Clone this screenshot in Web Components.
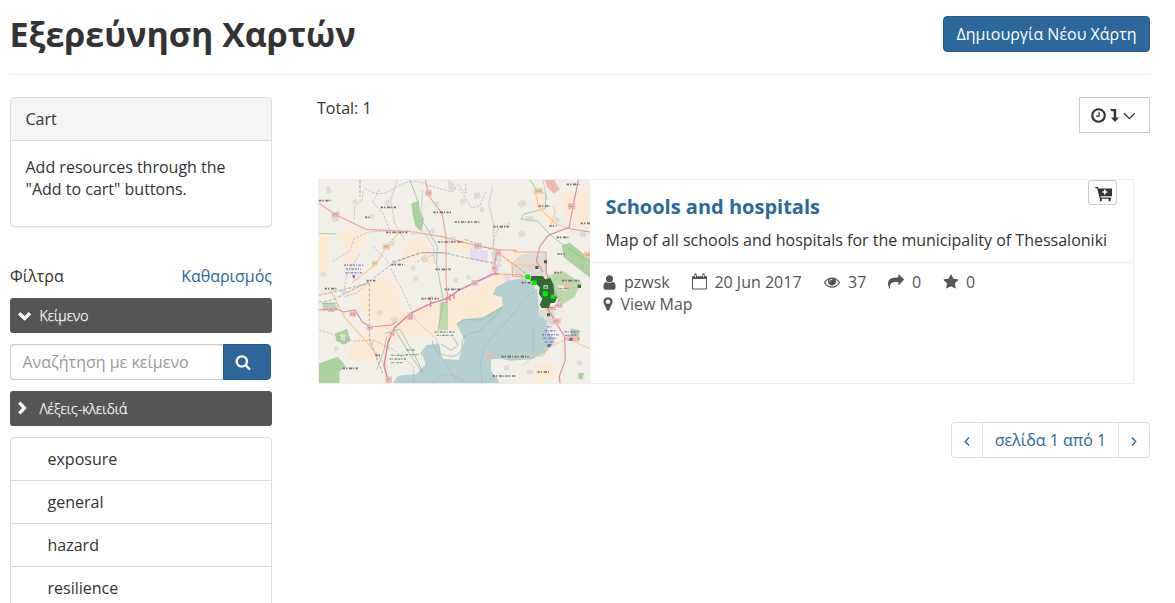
<!DOCTYPE html>
<html lang="el">
<head>
<meta charset="utf-8">
<title>Εξερεύνηση Χαρτών</title>
<style>
html,body{margin:0;height:603px;overflow:hidden;background:#fff}
body{font:16px/22px "Open Sans","Noto Sans",sans-serif;color:#333}
</style>
</head>
<body>
<explore-page></explore-page>
<script>
const define = (name, html) => {
  const t = document.createElement('template');
  t.innerHTML = '<style>*{box-sizing:border-box}:host{display:block;box-sizing:border-box}</style>' + html;
  customElements.define(name, class extends HTMLElement {
    constructor() { super(); this.attachShadow({mode: 'open'}).append(t.content.cloneNode(true)); }
  });
};

const FA = {
  user: 'M1536 1399q0 109-62.5 187t-150.5 78h-854q-88 0-150.5-78t-62.5-187q0-85 8.5-160.5t31.5-152 58.5-131 94-89 134.5-34.5q131 128 313 128t313-128q76 0 134.5 34.5t94 89 58.5 131 31.5 152 8.5 160.5zm-256-887q0 159-112.5 271.5t-271.5 112.5-271.5-112.5-112.5-271.5 112.5-271.5 271.5-112.5 271.5 112.5 112.5 271.5z',
  eye: 'M1664 960q-152-236-381-353 61 104 61 225 0 185-131.5 316.5t-316.5 131.5-316.5-131.5-131.5-316.5q0-121 61-225-229 117-381 353 133 205 333.5 326.5t434.5 121.5 434.5-121.5 333.5-326.5zm-720-384q0-20-14-34t-34-14q-125 0-214.5 89.5t-89.5 214.5q0 20 14 34t34 14 34-14 14-34q0-86 61-147t147-61q20 0 34-14t14-34zm848 384q0 34-20 69-140 230-376.5 368.5t-499.5 138.5-499.5-139-376.5-368q-20-35-20-69t20-69q140-229 376.5-368t499.5-139 499.5 139 376.5 368q20 35 20 69z',
  share: 'M1792 640q0 26-19 45l-512 512q-19 19-45 19t-45-19-19-45v-256h-224q-98 0-175.5 6t-154 21.5-133 42.5-105.5 69.5-80 101-48.5 138.5-17.5 181q0 55 5 123 0 6 2.5 23.5t2.5 26.5q0 15-8.5 25t-23.5 10q-16 0-28-17-7-9-13-22t-13.5-30-10.5-24q-127-285-127-451 0-199 53-333 162-403 875-403h224v-256q0-26 19-45t45-19 45 19l512 512q19 19 19 45z',
  star: 'M1728 647q0 22-26 48l-363 354 86 500q1 7 1 20 0 21-10.5 35.5t-30.5 14.5q-19 0-40-12l-449-236-449 236q-22 12-40 12-21 0-31.5-14.5t-10.5-35.5q0-6 2-20l86-500-364-354q-25-27-25-48 0-37 56-46l502-73 225-455q19-41 49-41t49 41l225 455 502 73q56 9 56 46z',
  marker: 'M1152 640q0-106-75-181t-181-75-181 75-75 181 75 181 181 75 181-75 75-181zm256 0q0 109-33 179l-364 774q-16 33-47.5 52t-67.5 19-67.5-19-46.5-52l-365-774q-33-70-33-179 0-212 150-362t362-150 362 150 150 362z',
  search: 'M1216 832q0-185-131.5-316.5t-316.5-131.5-316.5 131.5-131.5 316.5 131.5 316.5 316.5 131.5 316.5-131.5 131.5-316.5zm512 832q0 52-38 90t-90 38q-54 0-90-38l-343-342q-179 124-399 124-143 0-273.5-55.5t-225-150-150-225-55.5-273.5 55.5-273.5 150-225 225-150 273.5-55.5 273.5 55.5 225 150 150 225 55.5 273.5q0 220-124 399l343 343q37 37 37 90z',
  clock: 'M1024 544v448q0 14-9 23t-23 9h-320q-14 0-23-9t-9-23v-64q0-14 9-23t23-9h224v-352q0-14 9-23t23-9h64q14 0 23 9t9 23zm416 352q0-148-73-273t-198-198-273-73-273 73-198 198-73 273 73 273 198 198 273 73 273-73 198-198 73-273zm224 0q0 209-103 385.5t-279.5 279.5-385.5 103-385.5-103-279.5-279.5-103-385.5 103-385.5 279.5-279.5 385.5-103 385.5 103 279.5 279.5 103 385.5z'
};
/* other icons: [width, height, markup] */
const ICONS = {
  calendar: [15, 16, '<path d="M.5 4.5h14v10.5H.5z" fill="none" stroke="currentColor"/><path d="M0 2.2h15v2.8H0z" fill="currentColor"/><path d="M3.5.4v3.2M11.5.4v3.2" stroke="currentColor" stroke-width="2.4" stroke-linecap="round"/><path d="M3.5.8v2.6M11.5.8v2.6" stroke="#fff" stroke-width=".8"/>'],
  down: [14, 10, '<path d="M1.2 2.2 6.6 7.4l5.4-5.2" fill="none" stroke="currentColor" stroke-width="3.4"/>'],
  right: [10, 14, '<path d="M1.3 2.6 6.5 8l-5.2 5.4" fill="none" stroke="currentColor" stroke-width="3.4"/>'],
  thin: [13, 8, '<path d="M1 1.2 6.4 6.6l5.4-5.4" fill="none" stroke="currentColor" stroke-width="1.3"/>'],
  level: [9, 13, '<path d="M0 0h6.2v8.5H9L5 13 1 8.5h2.7V2.2H1.6z" fill="currentColor"/>'],
  prev: [6, 9, '<path d="M5 .5 1.2 4.5 5 8.5" fill="none" stroke="currentColor" stroke-width="1.3"/>'],
  next: [6, 9, '<path d="M1 .5 4.8 4.5 1 8.5" fill="none" stroke="currentColor" stroke-width="1.3"/>'],
  cart: [17, 16, '<path d="M.3 0h2.6l.6 1.4H17v7.8H5.6l.4 1.4h10.2v1.2h-.6v2.4h-2v-2.4H6.8v2.4h-2v-2.4L2.2 1.2H.3z" fill="currentColor"/><path d="M9.8 2.4v5.2M7.2 5h5.2" stroke="#fff" stroke-width="1.5"/>']
};
customElements.define('ui-icon', class extends HTMLElement {
  constructor() {
    super();
    this.attachShadow({mode: 'open'});
  }
  connectedCallback() {
    const n = this.getAttribute('name'), s = this.getAttribute('size') || 16, i = ICONS[n];
    this.shadowRoot.innerHTML = '<style>:host{display:inline-block;line-height:0;flex:none}svg{display:block;overflow:visible}</style>' +
      (i ? `<svg width="${i[0]}" height="${i[1]}" viewBox="0 0 ${i[0]} ${i[1]}">${i[2]}</svg>`
         : `<svg width="${s}" height="${s}" viewBox="0 0 1792 1792"><path fill="currentColor" d="${FA[n]}"/></svg>`);
  }
});

define('page-header', `<style>
:host{display:flex;justify-content:space-between;align-items:flex-start;height:75px;border-bottom:1px solid #eee;padding-top:15px}
h1{margin:0 0 0 -.5px;font-size:34px;line-height:38px;font-weight:700}
a{margin-top:1px;height:36px;width:207px;text-align:center;white-space:nowrap;line-height:35px;border:1px solid #265a88;background:#2c689c;color:#fff;border-radius:4px}
</style><h1><slot name="title"></slot></h1><a><slot name="action"></slot></a>`);

define('cart-panel', `<style>
:host{border:1px solid #ddd;border-radius:4px;height:130px;box-shadow:0 1px 1px rgba(0,0,0,.05);overflow:hidden}
header{height:43px;background:#f5f5f5;border-bottom:1px solid #ddd;padding:10px 14.5px}
div{padding:15px 14.5px}
</style><header><slot name="heading"></slot></header><div><slot></slot></div>`);

define('filter-bar', `<style>
:host{display:flex;align-items:center;height:35px;background:#555;color:#fff;border-radius:3px;font-size:14px}
span{width:29.5px;padding-left:8px}ui-icon{vertical-align:middle}
b{font-weight:300;-webkit-text-stroke:.25px #fff}
</style><span><slot name="icon"></slot></span><b><slot></slot></b>`);

define('search-box', `<style>
:host{display:flex;height:36px;width:261px}
div{width:213px;border:1px solid #ccc;border-right:0;border-radius:4px 0 0 4px;line-height:34px;padding-left:11.5px;color:#999;box-shadow:inset 0 1px 1px rgba(0,0,0,.075)}
button{font:inherit;flex:1;border:1px solid #265a88;background:#2c689c;color:#fff;border-radius:0 4px 4px 0;padding:0 0 0 11px;display:flex;align-items:center}
</style><div><slot></slot></div><button><ui-icon name="search" size="16"></ui-icon></button>`);

define('keyword-list', `<style>
:host{border:1px solid #ddd;border-radius:4px;overflow:hidden}
::slotted(div){height:43px;box-sizing:border-box;border-bottom:1px solid #ddd;padding:10px 0 0 36.5px}
</style><slot></slot>`);

define('page-nav', `<style>
:host{display:flex;width:199px;height:36px;border:1px solid #ddd;border-radius:4px;color:#2c689c;line-height:34px}
span{display:flex;align-items:center;justify-content:center;width:30px;padding-top:2px}
b{font-weight:400;flex:1;text-align:center;border:solid #ddd;border-width:0 1px;white-space:nowrap}
</style><span><ui-icon name="prev"></ui-icon></span><b><slot></slot></b><span><ui-icon name="next"></ui-icon></span>`);

define('meta-item', `<style>
:host{display:inline-flex;align-items:center;height:22px;white-space:nowrap}
</style><slot></slot>`);

/* thumbnail: three drawing units to a pixel, slightly softened like a scaled map tile */
define('map-thumb', `<style>:host{width:271px;height:203px;overflow:hidden}svg{display:block}</style>
<svg width="271" height="203" viewBox="27 30 813 609" fill="none">
<filter id="soft" x="0" y="0" width="1" height="1"><feGaussianBlur stdDeviation="1.3"/></filter>
<path fill="#f2efe9" d="M27 30h813v609H27z"/>
<g filter="url(#soft)"><path fill="#f2efe9" d="M0 0h880v680H0z"/>
<g fill="#fcead5">
<path d="M98 185l34-8 34 5 4 40-24 18-20 55-18-20-8-50-24-20zM278 222l50-20 36 22 14 60-30 4-20-22-50 12zM27 193h25l10 50-10 78-25-10zM178 335l44-18 42 30 4 60 40 22 90-37 100-38 90-50 4 92-30 30-90 24-40 38-110 12-64 8-40 40-24-70-40-68-44-56zM150 486l74 0-14 66-20 30-74-14 4-40zM752 70l90-10v130l-36-36-40-2zM666 62l32 0 16 60 40 50-66-30zM400 207l60 0 25 20 0 22-70-14zM560 250l70-8 70 30-8 42-80-20zM735 300l40 5 10 40-40 15zM670 590l60-15 6 50-60 14zM820 240l20 0v24h-18z"/></g>
<g fill="#d8d4d0" opacity=".75">
<path d="M608 275l28-22 74-8-2 72-20 32-54-32-24-10zM690 420l40 0 12 45-22 0-30-22zM545 245l30 0 0 30-28 0z"/></g>
<g fill="#e8dcec"><path d="M480 235l54 8-2 36-52-10zM546 276l26 8-8 32-22-6zM582 315l22 0v20h-20z"/></g>
<path fill="#b5d0d0" d="M246 645l18-28 54-5 28-28-4-20-12-14 20-25 38-4 8 45 50 4 18-60-25-48 20-14 60-7 58-32 0-28-28-7 8-22 38-20 44-8 30 20 14 24 6 70 22 14 2 32 20 22-4 16-24 28-40 18-64 4-28-6-30 2 0 34 20 24 12 38z"/>
<path fill="#f2efe9" d="M390 478l40 0 20 60-20 18-30-6z"/>
<g fill="#add19e">
<path d="M304 100l22-8 4 30 12 24-8 40-18-18-8-34zM756 225l24-7 60 50v55l-44-34-36-28zM20 582l64-22 24 30-20 14 0 41-68 0zM76 490l36-14 10 36-20 12-24-12zM782 475l26 6 0 35-24-6zM806 608l16 2-6 20-12-6z"/>
<path opacity=".8" d="M708 320l48-18 60 38-24 42-38 22-20-30z"/>
<path opacity=".75" d="M390 396h24v84h-28zM36 400l38-3 8 22-42 0z"/></g>
<path fill="#f2efe9" opacity=".8" d="M90 492l16 2-2 18-10-4zM742 344l28 4 4 14-24-2z"/>
<g fill="#f2b8b0"><path d="M704 30l28 0 18 28-18 13-20-18zM528 560l14-13 10 4-16 18-8-4zM764 338l14 4-4 17-12-5z"/></g>
<g stroke="#94bf99" stroke-width="2.8" opacity=".85">
<path d="M27 190l52 2M300 30l26 70M334 150l14 20 34 60-2 52 20 110-16 90M660 30l20 28 28 14-3 44-64 16-8 15 50 6 38 42 50 38 80 50M366 512q6 40 40 44 40 12 50-22-6-50 50-48l70-70M224 490l46-12 28 50 22 40 20 40M230 500l-8 40-22 60M258 484l46 76 32 46M428 500l16 25-20 16-30-18M440 462l24-14 50 2 64-40M36 400l46 0 0 20-44 0"/></g>
<g stroke="#b7cdc8" stroke-width="2.4"><path d="M548 50l-12 50 14 60 0 90 24 40M262 30l-20 60 12 70 30 50M338 60l-8 110 40 60 4 50M160 60l-4 30-22 20-2 40M698 30l14 60"/></g>
<g stroke="#b9a0c9" stroke-width="2.6" stroke-dasharray="8 4" opacity=".75">
<path d="M165 54q40 34 90 0t100-8l70 20 20-22 22 26 0-28M208 60l-20 36 32 36 20 50-64 4-44 20-12 36-54 34M448 55l36 58 24-4 20-44M190 230l40 40 56 110 32 70 60 56 14 52 46 70M420 250l-40 0-66 28M600 160l-40 20-14 60M178 340l-40 30-36 10M27 480l44 14 60 20 60-4 60 30 60 50 0 49M370 639q40-50 100 0M670 470l0 90-36 30M150 250l-38 60-10 52"/></g>
<path stroke="#9baddb" stroke-width="2.5" stroke-dasharray="9 5" d="M684 358l-28 18-60 70-52 60q-30 28-32 80l4 53"/>
<g stroke="#faca93" stroke-width="3.4"><path d="M127 338l72-56 30-53 40-44M62 360l14 28 28 54 80 90 48 60M677 70l8 40 50 50 34 14M730 110l6 18-14 40M560 244l48 40 90 4M600 558h100l12-24 60-28 68 30M702 388l4 30 10 12"/></g>
<g stroke="#f2a892" stroke-width="3.5"><path d="M27 100l50 34 92 44 130 6 96 16 110 28 56 10 60 4M346 30l12 50 38 50 12 70 0 130 6 60M610 246l98 0 0 56M558 312l70 2 20 8M606 284l2 34 40 4"/></g>
<g stroke="#e08fa3" stroke-width="3.6"><path d="M805 30l-10 50-18 92-62 24-26 34-10 45 20 30M766 174l74 12M27 420l48-4 26 10 34-6 22 36 26 15 62-6 14-10M560 246l-8 50 6 16M709 270l0 40 26 56 8 18M752 384l-18 28-24 0 26 42 28 46 2 70-18 50 2 19M712 416l26 2M766 504l44 2"/>
<path stroke="#dc8299" stroke-width="4.4" d="M236 639l-14-52 12-70 20-44 48-44 60-28 50-16 34-24 46-22 56-26 18-2M362 392v18M420 372v20M432 370v16M410 380v18"/></g>
<g stroke="#999" stroke-width="2.4" stroke-dasharray="10 5"><path d="M27 396q28 0 60-16l92-46 70-54 80-32 74 0 30 8 120 24M340 248h60M464 208l82 32M178 340v170l40 100M27 376l150-36M246 276l90-28M554 240l104 78M150 30v50"/></g>
<g fill="#d4d4d3" opacity=".7"><path d="M64 144l22-8 2 14-18 8zM46 55l12-8 8 20-14 6zM126 94l12-10 6 14-10 6zM224 95l14-8 0 20-12 0zM180 132l14 2-6 14-10-4zM412 30l16 6 10 20-12 14-10-14zM490 70l18-4 4 18-18 4zM370 94l18 2-4 18-12-6zM300 182l20 0 2 14-18-2zM356 180l14-6 6 12-14 8zM300 290l14-4 4 14-12 4zM240 212l14 2-2 16-12-4zM332 260l14-6 10 18-16 8zM420 200l18 0-2 20-18-4zM90 360l18-4 6 16-18 0zM240 446l18-8 10 14-20 8zM198 425l18-6 4 14-16 6zM354 380l14-6 0 16-14 2zM30 310l16-8 4 16-14 4zM620 100l22-14 8 18-18 10zM646 138l24 0 2 16-22 2zM624 186l18-4 4 16-18 4zM510 110l14 4-4 14-12-4zM736 140l14 4-4 14-12-4zM810 180l20 10-4 12-18-4zM430 325l14 0 0 12-14 0zM450 90l14-6 4 14-16 4zM310 322l14-4 0 14-12 2zM470 315l14 2-2 12-14-2zM580 590l14-6 6 14-16 4zM650 600l14-4 8 14-20 4zM800 570l16 4 0 14-14-4zM180 510l12 4-2 16-12-4zM74 530l12 2-4 12-10-2z"/></g>
<g fill="#ebbcb9"><path d="M64 125h24v17H64zM346 60h19v18h-19zM492 218h23v18h-23zM555 240h18v18h-18zM546 286h16v18h-16zM484 330h18v17h-18zM774 100h22v18h-22zM292 428h18v22h-18zM118 424h20v16h-20zM54 412h20v14H54zM170 466h18v14h-18zM238 484h16v14h-16zM226 620h20v18h-20zM740 398h18v16h-18zM728 445h24v16h-24zM770 496h32v16h-32z"/></g>
<g fill="#e9cfa8"><path d="M218 221h22v18h-22zM186 272h16v16h-16zM672 54h26v18h-26zM822 245h18v18h-18z"/></g>
<g stroke="#925b50" stroke-width="2.5" stroke-dasharray="4 3" opacity=".8"><path d="M69 134h15M350 69h11M496 227h15M222 230h14M190 280h9M677 63h17M778 109h14M296 435h10M296 443h10M122 432h12M58 419h12M174 473h10M242 491h9M231 629h9M559 249h10M549 295h9M487 339h11M743 406h11M733 453h14M827 255h11"/></g>
<g stroke="#444" stroke-width="5" stroke-dasharray="7 3 4 5 10 3 3 4" opacity=".72"><path d="M27 92h36M212 112h46M370 127h54M434 156h74M228 187h64M384 216h74M244 284h40M376 298h48M44 356h38M170 332h26M334 386h56M404 358h46M550 170h50M770 43h40M686 108h34M718 168h22M812 160h28M740 202h36M742 252h22M732 308h22M756 332h54M634 338h30M98 595h46M574 560h82M548 618h68M682 606h36M196 556h14M165 142h18"/></g>
<g stroke="#557c5c" stroke-width="4" stroke-dasharray="6 3 3 4 8 3" opacity=".75"><path d="M374 486h60M380 496h50M244 556h46M238 567h50M244 578h36M290 540h24M288 554h38M748 356h28"/></g>
<g stroke="#7466bc" stroke-width="4.4" stroke-dasharray="6 3 3 4 8 3" opacity=".75"><path d="M102 286h58M108 297h45M106 308h50M712 470h14M704 482h32M696 494h50M700 505h40M704 516h30M764 485h44M766 496h36"/></g>
<path fill="#7466bc" d="M126 316h10l-4 12zM713 522h12l-4 9-10 0zM779 504h9v8h-12z"/>
</g>
<path fill="#346d34" d="M663 318l36 0 6 10 16-4 10 20 2 32 8 6-6 16-14 2-4 14-22 0-6-10 8-18-10-14 2-20-14-14-14-6zM676 288h9v9h-9zM702 271h9v9h-9zM803 344h10v10h-10zM711 430h9v9h-9z"/>
<path fill="#add19e" d="M700 345h14v12h-14z"/><path fill="#346d34" d="M704 349h6v6h-6z"/>
<path fill="#0e0" d="M646 314h14v14h-14zM665 331h15v14h-15zM698 364h15v15h-15zM722 374h14v12h-14z"/>
</svg>`);

define('resource-card', `<style>
:host{display:flex;width:816px;height:205px;border:1px solid #eee;position:relative}
section{flex:1;display:flex;flex-direction:column;padding-right:1px}
.top{height:83px;border-bottom:1px solid #eee;padding:16px 0 0 15.4px}
h4{margin:0;font-size:20px;line-height:22px;font-weight:700;color:#2c689c}
p{margin:11px 0 0;white-space:nowrap}
.meta{color:#555;padding:8px 0 0 13px;display:flex;flex-direction:column}
.row{display:flex}
button{position:absolute;right:16px;top:0;width:29px;height:25px;border:1px solid #ccc;border-radius:3px;background:#fff;color:#333;padding:5px 0 0 6px}
button ui-icon{display:block}
</style>
<map-thumb></map-thumb>
<section>
<div class="top"><h4><slot name="title"></slot></h4><p><slot name="abstract"></slot></p></div>
<div class="meta">
<div class="row"><slot name="stats"></slot></div>
<div class="row"><slot name="view"></slot></div>
</div>
</section>
<button><ui-icon name="cart"></ui-icon></button>`);

define('explore-page', `<style>
:host{padding:0 25px 0 10px;height:603px;overflow:hidden}
main{display:flex;padding-top:22px}
aside{width:262px;margin-right:45px}
.fh{display:flex;justify-content:space-between;margin:38px 0 11px}
.fh a{color:#2c689c}
search-box,keyword-list{margin:11px 0}
.content{flex:1}
.bar{display:flex;justify-content:space-between;height:82px}
.sort{width:71px;height:36px;border:1px solid #ccc;display:flex;align-items:center;padding:1px 0 0 10px}
resource-card{margin-left:1px}
page-nav{margin:38px 0 0 auto}
</style>
<page-header><span slot="title">Εξερεύνηση Χαρτών</span><span slot="action">Δημιουργία Νέου Χάρτη</span></page-header>
<main>
<aside>
<cart-panel><span slot="heading">Cart</span>Add resources through the "Add to cart" buttons.</cart-panel>
<div class="fh"><span>Φίλτρα</span><a>Καθαρισμός</a></div>
<filter-bar><ui-icon slot="icon" name="down"></ui-icon>Κείμενο</filter-bar>
<search-box>Αναζήτηση με κείμενο</search-box>
<filter-bar><ui-icon slot="icon" name="right"></ui-icon>Λέξεις-κλειδιά</filter-bar>
<keyword-list><div>exposure</div><div>general</div><div>hazard</div><div>resilience</div></keyword-list>
</aside>
<div class="content">
<div class="bar"><span>Total: 1</span>
<div class="sort"><ui-icon name="clock" size="17"></ui-icon><ui-icon name="level" style="margin-left:3px"></ui-icon><ui-icon name="thin" style="margin-left:4px"></ui-icon></div></div>
<resource-card>
<span slot="title">Schools and hospitals</span>
<span slot="abstract">Map of all schools and hospitals for the municipality of Thessaloniki</span>
<meta-item slot="stats" style="width:89px"><ui-icon name="user" size="17" style="margin:0 6px 0 -2px"></ui-icon>pzwsk</meta-item>
<meta-item slot="stats" style="width:132px"><ui-icon name="calendar" style="margin:0 7.8px 0 -.4px"></ui-icon>20 Jun 2017</meta-item>
<meta-item slot="stats" style="width:64px"><ui-icon name="eye" style="margin-right:8px"></ui-icon>37</meta-item>
<meta-item slot="stats" style="width:55px"><ui-icon name="share" style="margin-right:8px"></ui-icon>0</meta-item>
<meta-item slot="stats"><ui-icon name="star" style="margin-right:7px"></ui-icon>0</meta-item>
<meta-item slot="view"><ui-icon name="marker" style="margin:0 4.4px 0 -3px"></ui-icon>View Map</meta-item>
</resource-card>
<page-nav>σελίδα 1 από 1</page-nav>
</div>
</main>`);
</script>
</body>
</html>
